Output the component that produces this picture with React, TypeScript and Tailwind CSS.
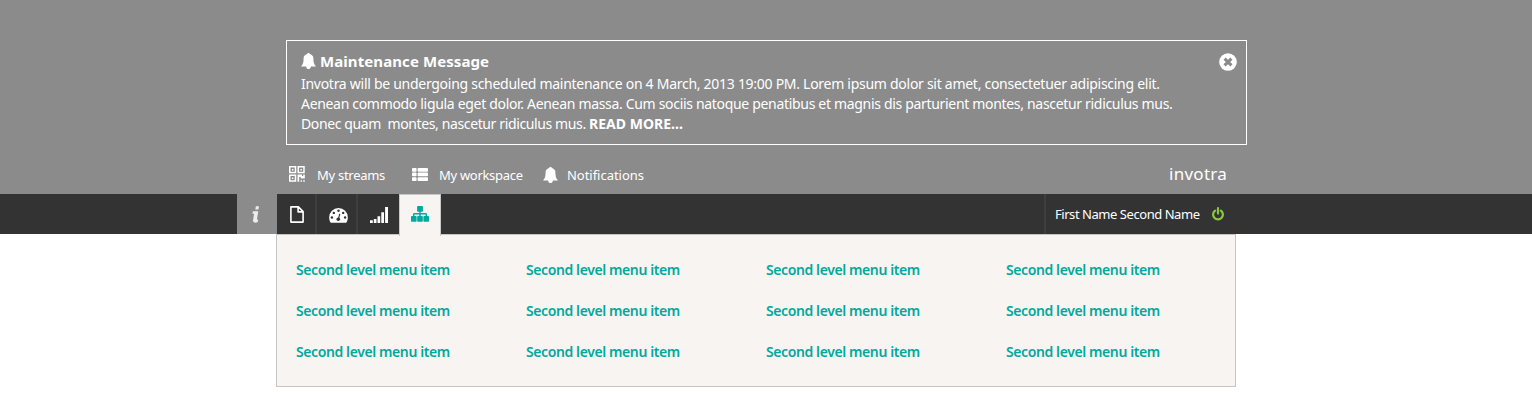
import type { ReactNode } from "react";

const BellIcon = () => (
  <svg width="15" height="16" viewBox="0 0 15 16" fill="currentColor" className="block shrink-0">
    <path d="M7.5 0C8.3 0 8.8.5 8.9 1.1C11.3 1.7 12.4 3.4 12.4 5.4C12.5 9 12.8 11.2 15 13.4H9.9C9.7 15 8.8 16 7.5 16S5.3 15 5.1 13.4H0C2.2 11.2 2.5 9 2.6 5.4C2.6 3.4 3.7 1.7 6.1 1.1C6.2.5 6.7 0 7.5 0Z" />
  </svg>
);

const CloseIcon = () => (
  <svg width="18" height="18" viewBox="0 0 18 18" className="block">
    <circle cx="9" cy="9" r="8.8" fill="#fff" />
    <path d="M5.6 5.6L12.4 12.4M12.4 5.6L5.6 12.4" stroke="#8a8a8a" strokeWidth="3" />
  </svg>
);

const QrIcon = () => (
  <svg width="16" height="16" viewBox="0 0 16 16" fill="none" stroke="currentColor" strokeWidth="1.5" className="block">
    <path d="M.75 .75H6.5V6.5H.75ZM9.25 .75H15V6.5H9.25ZM.75 9.25H6.5V15H.75Z" />
    <path
      d="M2.9 2.9H4.4V4.4H2.9ZM11.4 2.9H12.9V4.4H11.4ZM2.9 11.4H4.4V12.9H2.9ZM8.5 8.5H13V10H14.2V8.5H15.8V12.6H11.8V11H10.2V15.8H8.5ZM11.6 14.2H13V15.8H11.6ZM14.2 14.2H15.8V15.8H14.2Z"
      fill="currentColor"
      stroke="none"
    />
  </svg>
);

const ListIcon = () => (
  <svg width="16" height="13" viewBox="0 0 16 13" fill="currentColor" className="block">
    <rect x="0" y="0" width="4.6" height="3.7" rx=".8" />
    <rect x="5.6" y="0" width="10.4" height="3.7" rx=".8" />
    <rect x="0" y="4.6" width="4.6" height="3.7" rx=".8" />
    <rect x="5.6" y="4.6" width="10.4" height="3.7" rx=".8" />
    <rect x="0" y="9.3" width="4.6" height="3.7" rx=".8" />
    <rect x="5.6" y="9.3" width="10.4" height="3.7" rx=".8" />
  </svg>
);

const InfoIcon = () => (
  <svg width="8" height="17" viewBox="0 0 8 17" className="block text-[#ececec]" fill="currentColor">
    <path d="M3.9 .2H7L6.4 3.5H3.3ZM.9 5.3H6.3L4.9 13.4H6.2L5.8 15.9C3.6 17.2 .6 16.8 1 14.4L2.1 7.8H.4Z" />
  </svg>
);

const FileIcon = () => (
  <svg width="14" height="17" viewBox="0 0 14 17" fill="none" stroke="currentColor" strokeWidth="1.6" className="block">
    <path d="M.9 .9H8.4L13.1 5.6V16.1H.9ZM8.1 .9V5.9H13.1" strokeLinejoin="round" />
  </svg>
);

const DashboardIcon = () => (
  <svg width="19" height="15" viewBox="0 0 19 15" className="block">
    <path d="M9.5 0A9.3 9.3 0 0 1 18.8 9.4C18.8 11.3 18.3 13 17.4 14.4Q17.1 14.8 16.7 14.8H2.3Q1.9 14.8 1.6 14.4C.7 13 .2 11.3 .2 9.4A9.3 9.3 0 0 1 9.5 0Z" fill="currentColor" />
    <g fill="#333">
      <circle cx="2.9" cy="9.5" r="1.2" />
      <circle cx="4.8" cy="4.9" r="1.2" />
      <circle cx="9.5" cy="2.8" r="1.2" />
      <circle cx="14.2" cy="4.9" r="1.2" />
      <circle cx="16.1" cy="9.5" r="1.2" />
      <circle cx="9.3" cy="11.2" r="1.8" />
    </g>
    <path d="M9.4 11.2L10.8 5.8" stroke="#333" strokeWidth="1.2" />
  </svg>
);

const SignalIcon = () => (
  <svg width="18" height="16" viewBox="0 0 18 16" fill="currentColor" className="block">
    <path d="M0 13.2H2.8V16H0ZM3.8 12H6.5V16H3.8ZM7.5 9.3H10.2V16H7.5ZM11.3 5.2H14V16H11.3ZM15.1 0H18V16H15.1Z" />
  </svg>
);

const SitemapIcon = () => (
  <svg width="18" height="16" viewBox="0 0 18 16" fill="#00a99d" className="block">
    <rect x="6.1" y="0" width="5.8" height="5.7" rx=".8" />
    <rect x="0" y="10.1" width="5.6" height="5.7" rx=".8" />
    <rect x="6.2" y="10.1" width="5.6" height="5.7" rx=".8" />
    <rect x="12.4" y="10.1" width="5.6" height="5.7" rx=".8" />
    <path d="M2.7 11V8.4Q2.7 7.8 3.3 7.8H14.7Q15.3 7.8 15.3 8.4V11M9 5V11" fill="none" stroke="#00a99d" strokeWidth="1.4" />
  </svg>
);

const PowerIcon = () => (
  <svg width="12" height="14" viewBox="0 0 12 14" fill="none" stroke="#8cc63f" strokeWidth="2.2" strokeLinecap="round" className="block">
    <path d="M3.1 3.6A4.9 4.9 0 1 0 8.9 3.6M6 1.2V6.6" />
  </svg>
);

const tabs: { icon: ReactNode; cell: string }[] = [
  { icon: <FileIcon />, cell: "w-[40px] pl-[13px] pt-[12px] border-r-2 border-[#3e3e3e]" },
  { icon: <DashboardIcon />, cell: "w-[41px] pl-[12px] pt-[14px] border-r-2 border-[#3e3e3e]" },
  { icon: <SignalIcon />, cell: "w-[41px] pl-[12px] pt-[13px]" },
];

const menuRows = [0, 1, 2];
const menuColumns = [0, 1, 2, 3];

export default function App() {
  return (
    <div className="h-[403px] overflow-hidden bg-white font-['Noto_Sans',sans-serif] text-white">
      <header className="flex h-[194px] flex-col bg-[#8b8b8b] pt-[40px] pl-[286px]">
        <section className="flex h-[105px] w-[961px] justify-between border border-white pl-[14px] pr-[9px]">
          <div className="whitespace-pre pt-[9px] text-[14px] leading-[20px]">
            <h1 className="mb-[2px] flex h-[22px] items-center gap-1 text-[15px] font-bold tracking-[0.084px]">
              <BellIcon />
              Maintenance Message
            </h1>
            <p className="tracking-[-0.277px]">
              Invotra will be undergoing scheduled maintenance on 4 March, 2013 19:00 PM. Lorem ipsum dolor sit amet, consectetuer adipiscing elit.
            </p>
            <p className="tracking-[-0.318px]">
              Aenean commodo ligula eget dolor. Aenean massa. Cum sociis natoque penatibus et magnis dis parturient montes, nascetur ridiculus mus.
            </p>
            <p className="tracking-[-0.38px]">
              {"Donec quam  montes, nascetur ridiculus mus. "}
              <a className="font-bold tracking-[0.02px]">READ MORE...</a>
            </p>
          </div>
          <button aria-label="Close" className="mt-[12px] h-[18px]">
            <CloseIcon />
          </button>
        </section>
        <div className="flex w-[941px] justify-between text-[13px]">
          <nav className="flex whitespace-nowrap leading-[20px]">
            <a className="flex w-[123px] pl-[3px]">
              <span className="w-[28px] pt-[21px]"><QrIcon /></span>
              <span className="pt-[20px] tracking-[-0.28px]">My streams</span>
            </a>
            <a className="flex w-[134px] pl-[3px]">
              <span className="w-[27px] pt-[23px]"><ListIcon /></span>
              <span className="pt-[20px] tracking-[-0.3px]">My workspace</span>
            </a>
            <a className="flex">
              <span className="w-[24px] pt-[22px]"><BellIcon /></span>
              <span className="pt-[20px] tracking-[-0.03px]">Notifications</span>
            </a>
          </nav>
          <span className="pt-[17px] text-[17px] leading-[24px] tracking-[0.25px]">invotra</span>
        </div>
      </header>

      <div className="flex h-[40px] bg-[#333] pl-[237px]">
        <a className="w-[40px] bg-[#8b8b8b] pl-[15px] pt-[12px]"><InfoIcon /></a>
        {tabs.map((tab, i) => (
          <a key={i} className={tab.cell}>{tab.icon}</a>
        ))}
        <a className="relative z-10 h-[42px] w-[42px] border-x border-t border-[#c8c8c8] bg-[#f8f4f1] pl-[11px] pt-[11px]"><SitemapIcon /></a>
        <div className="ml-[603px] flex w-[192px] border-l-2 border-[#3e3e3e] pl-[9px]">
          <span className="w-[157px] whitespace-nowrap pt-[10px] text-[13px] leading-[20px] tracking-[-0.45px]">First Name Second Name</span>
          <span className="pt-[13px]"><PowerIcon /></span>
        </div>
      </div>

      <main className="ml-[276px] h-[153px] w-[960px] border border-[#c6c6c6] bg-[#f8f4f1] pl-[19px] pt-[25px] text-[14px] leading-[20px] font-semibold tracking-[-0.4px] text-[#00a99d]">
        <div className="grid grid-cols-[230px_240px_240px_200px] gap-y-[21px]">
          {menuRows.map((row) => menuColumns.map((column) => <a key={`${row}-${column}`}>Second level menu item</a>))}
        </div>
      </main>
    </div>
  );
}
